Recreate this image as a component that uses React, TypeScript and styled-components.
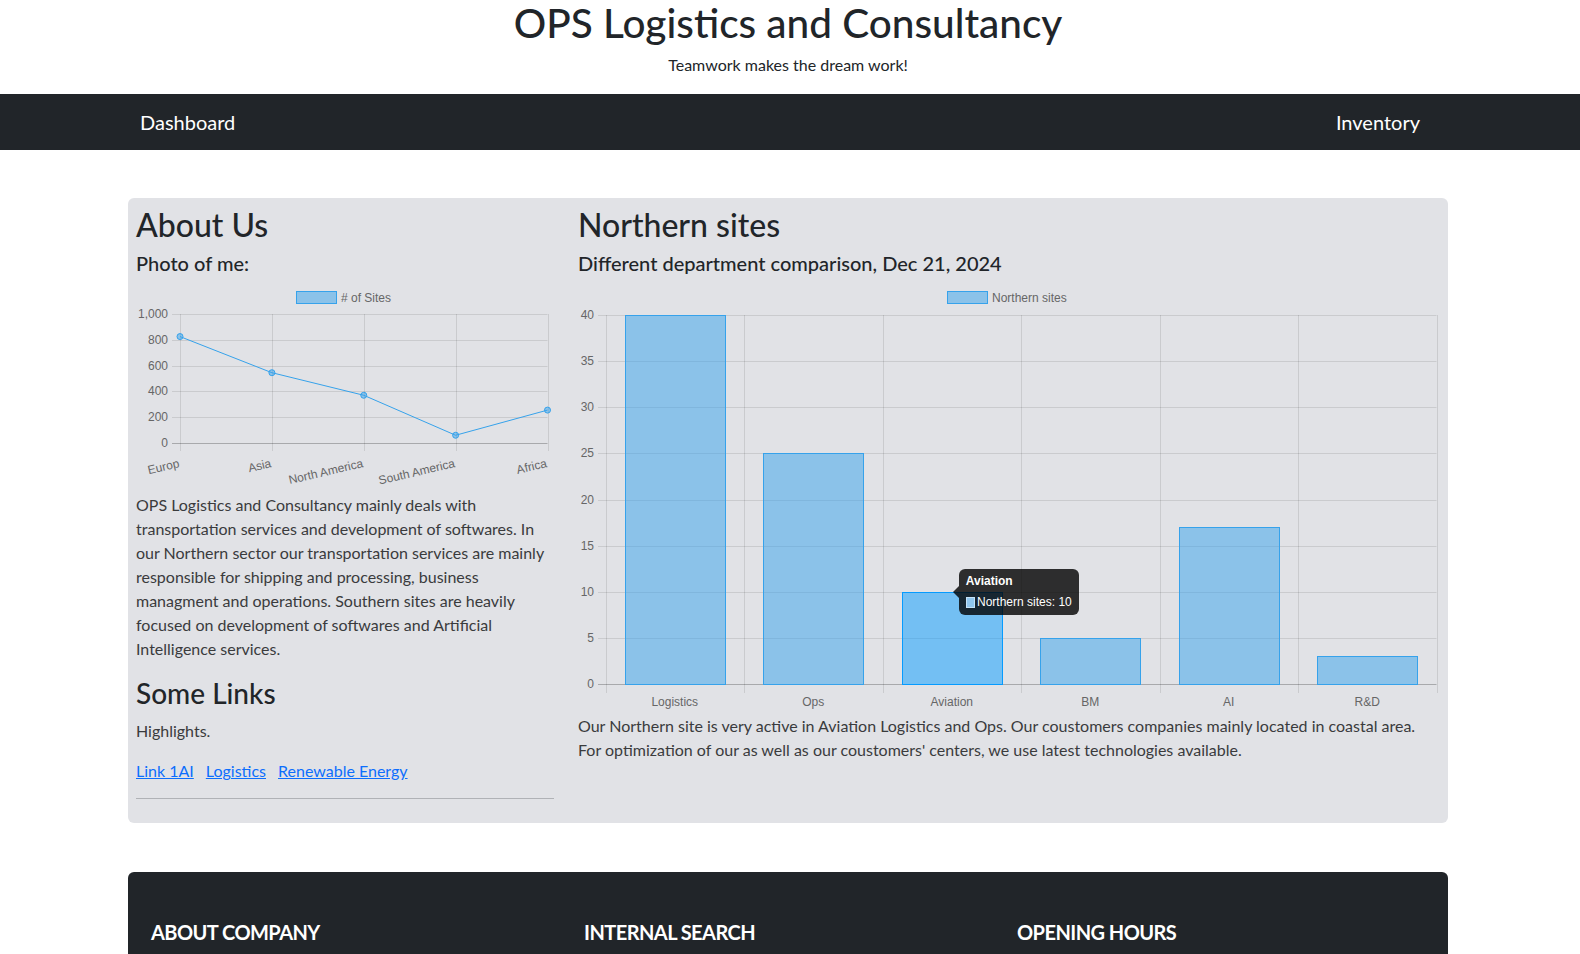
import React from 'react';
import styled, { createGlobalStyle } from 'styled-components';

const FONT = `Lato, "Noto Sans", "Open Sans", sans-serif`;
const CHART_FONT = `"Liberation Sans", Arial, Helvetica, sans-serif`;
const BLUE = 'rgb(54,162,235)';
const BLUE_FILL = 'rgba(54,162,235,0.5)';
const HOVER_FILL = 'rgba(5,155,255,0.5)';
const HOVER_BORDER = 'rgb(5,155,255)';
const GRID = 'rgba(0,0,0,0.1)';
const ZERO = 'rgba(0,0,0,0.25)';

const GlobalStyle = createGlobalStyle`
  html, body { margin: 0; padding: 0; overflow: hidden; background: #fff; }
  body { font-family: ${FONT}; font-size: 16px; line-height: 1.5; color: #212529; }
  *, *::before, *::after { box-sizing: border-box; }
`;

const Header = styled.header`
  text-align: center;
  padding-right: 4px;
`;

const Title = styled.h1`
  margin: 0 0 7px;
  font-size: 40.5px;
  font-weight: 500;
  line-height: 46px;
`;

const Tagline = styled.p`
  margin: 0 0 17px;
  font-size: 16px;
`;

const NavBar = styled.nav`
  background: #212529;
  height: 56px;
`;

const NavInner = styled.div`
  width: 1320px;
  height: 100%;
  margin-left: calc(50% - 662px);
  display: flex;
  align-items: center;
  justify-content: space-between;
  padding: 0 28px 0 12px;
`;

const NavItem = styled.a`
  color: #fff;
  font-size: 20px;
  text-decoration: none;
  line-height: 1.5;
`;

const Container = styled.div`
  width: 1320px;
  margin: 48px 0 0 calc(50% - 662px);
`;

const Card = styled.section`
  background: #e1e2e6;
  border-radius: 6px;
  padding: 8px 11px 8px 8px;
  display: grid;
  grid-template-columns: 418px 859px;
  column-gap: 24px;
  align-items: start;
`;

const Column = styled.div`
  display: flex;
  flex-direction: column;
  min-width: 0;
`;

const H2 = styled.h2`
  margin: 0 0 7px;
  font-size: 32px;
  font-weight: 500;
  line-height: 1.2;
`;

const H3 = styled.h3`
  margin: 0 0 8px;
  font-size: 28px;
  font-weight: 500;
  line-height: 1.2;
`;

const H5 = styled.h5`
  margin: 0 0 9px;
  font-size: 20px;
  font-weight: 500;
  line-height: 1.2;
`;

const Text = styled.p`
  margin: 0 0 16px;
  color: #3a3b3d;
`;

const Links = styled.div`
  display: flex;
  gap: 12px;
  line-height: 24px;
`;

const Link = styled.a`
  color: #0d6efd;
  text-decoration: underline;
`;

const Rule = styled.hr`
  margin: 15px 0 16px;
  border: 0;
  border-top: 1px solid #212529;
  opacity: 0.25;
`;

const ChartWrap = styled.div<{ $h: number }>`
  position: relative;
  width: 100%;
  height: ${(p) => p.$h}px;
  svg { display: block; overflow: visible; }
`;

const Tooltip = styled.div`
  position: absolute;
  width: 120px;
  height: 46px;
  padding: 6px 7px;
  border-radius: 6px;
  background: rgba(0, 0, 0, 0.8);
  color: #fff;
  font-family: ${CHART_FONT};
  font-size: 12px;
  &::before {
    content: '';
    position: absolute;
    left: -6px;
    top: 17px;
    border-top: 6px solid transparent;
    border-bottom: 6px solid transparent;
    border-right: 6px solid rgba(0, 0, 0, 0.8);
  }
`;

const TipTitle = styled.div`
  font-weight: 700;
  line-height: 12px;
  margin-bottom: 9px;
`;

const TipBody = styled.div`
  display: flex;
  align-items: center;
  gap: 2px;
  line-height: 13px;
  white-space: nowrap;
`;

const TipSwatch = styled.span`
  width: 11px;
  height: 11px;
  background: #90c6ee;
  border: 1px solid #c4e2f8;
`;

const Footer = styled.footer`
  width: 1320px;
  height: 120px;
  margin: 49px 0 0 calc(50% - 662px);
  background: #212529;
  border-radius: 6px 6px 0 0;
  padding: 48px 0 0 23px;
  display: grid;
  grid-template-columns: repeat(3, 433px);
  align-items: start;
  color: #fff;
`;

const FooterHeading = styled.h5`
  margin: 0;
  font-size: 20px;
  font-weight: 700;
  line-height: 1.2;
  letter-spacing: -0.55px;
  text-transform: uppercase;
  color: #fff;
`;

/* ---------- line chart ---------- */
const lineData = [
  { label: 'Europ', v: 825 },
  { label: 'Asia', v: 545 },
  { label: 'North America', v: 370 },
  { label: 'South America', v: 60 },
  { label: 'Africa', v: 255 },
];

const LineChart: React.FC = () => {
  const x0 = 44, x1 = 411.5, y0 = 159, yt = 30;
  const ly = (v: number) => y0 - (v / 1000) * (y0 - yt);
  const lx = (i: number) => x0 + (i * (x1 - x0)) / 4;
  const crisp = (n: number) => Math.round(n) + 0.5;
  const ticks = [0, 200, 400, 600, 800, 1000];
  return (
    <ChartWrap $h={209}>
      <svg width="418" height="209" viewBox="0 0 418 209" fontFamily={CHART_FONT} fontSize="12">
        <rect x="160.5" y="7.5" width="40" height="12" fill={BLUE_FILL} stroke={BLUE} strokeWidth="1" />
        <text x="205" y="17.5" fill="#666">
          # of Sites
        </text>
        {ticks.map((t) => (
          <g key={t}>
            <line x1={36} x2={x1} y1={crisp(ly(t))} y2={crisp(ly(t))} stroke={t === 0 ? ZERO : GRID} />
            <text x={32} y={ly(t) + 4} textAnchor="end" fill="#666">
              {t === 1000 ? '1,000' : t}
            </text>
          </g>
        ))}
        {lineData.map((d, i) => (
          <line key={d.label} x1={crisp(lx(i))} x2={crisp(lx(i))} y1={yt} y2={y0 + 8} stroke={GRID} />
        ))}
        <polyline
          points={lineData.map((d, i) => `${lx(i)},${ly(d.v)}`).join(' ')}
          fill="none"
          stroke={BLUE}
          strokeWidth="1"
        />
        {lineData.map((d, i) => (
          <circle key={d.label} cx={lx(i)} cy={ly(d.v)} r="3" fill={BLUE_FILL} stroke={BLUE} strokeWidth="1" />
        ))}
        {lineData.map((d, i) => (
          <text
            key={d.label}
            transform={`translate(${lx(i)},183) rotate(-13)`}
            textAnchor="end"
            fill="#666"
          >
            {d.label}
          </text>
        ))}
      </svg>
    </ChartWrap>
  );
};

/* ---------- bar chart ---------- */
const barData = [
  { label: 'Logistics', v: 40 },
  { label: 'Ops', v: 25 },
  { label: 'Aviation', v: 10 },
  { label: 'BM', v: 5 },
  { label: 'AI', v: 17 },
  { label: 'R&D', v: 3 },
];
const HOVER = 2;

const BarChart: React.FC = () => {
  const x0 = 27.5, x1 = 858.5, y0 = 400, yt = 31;
  const cw = (x1 - x0) / 6;
  const bw = cw * 0.72;
  const by = (v: number) => y0 - (v * (y0 - yt)) / 40;
  const crisp = (n: number) => Math.round(n) + 0.5;
  const ticks = [0, 5, 10, 15, 20, 25, 30, 35, 40];
  const hov = barData[HOVER];
  const tipX = x0 + (HOVER + 0.5) * cw + 7;
  const tipY = by(hov.v) - 23;
  return (
    <ChartWrap $h={430}>
      <svg width="859" height="430" viewBox="0 0 859 430" fontFamily={CHART_FONT} fontSize="12">
        <rect x="369.5" y="7.5" width="40" height="12" fill={BLUE_FILL} stroke={BLUE} strokeWidth="1" />
        <text x="414" y="17.5" fill="#666">
          Northern sites
        </text>
        {ticks.map((t) => (
          <g key={t}>
            <line x1={20} x2={x1} y1={crisp(by(t))} y2={crisp(by(t))} stroke={t === 0 ? ZERO : GRID} />
            <text x={16} y={by(t) + 4} textAnchor="end" fill="#666">
              {t}
            </text>
          </g>
        ))}
        {Array.from({ length: 7 }).map((_, i) => (
          <line key={i} x1={crisp(x0 + i * cw)} x2={crisp(x0 + i * cw)} y1={yt} y2={y0 + 9} stroke={GRID} />
        ))}
        {barData.map((d, i) => {
          const cx = x0 + (i + 0.5) * cw;
          const top = by(d.v);
          const hv = i === HOVER;
          return (
            <rect
              key={d.label}
              x={Math.round(cx - bw / 2) + 0.5}
              y={Math.round(top) + 0.5}
              width={Math.round(bw)}
              height={Math.round(y0) - Math.round(top)}
              fill={hv ? HOVER_FILL : BLUE_FILL}
              stroke={hv ? HOVER_BORDER : BLUE}
              strokeWidth="1"
            />
          );
        })}
        {barData.map((d, i) => (
          <text key={d.label} x={x0 + (i + 0.5) * cw} y={421.5} textAnchor="middle" fill="#666">
            {d.label}
          </text>
        ))}
      </svg>
      <Tooltip style={{ left: tipX, top: tipY }}>
        <TipTitle>{hov.label}</TipTitle>
        <TipBody>
          <TipSwatch />
          Northern sites: {hov.v}
        </TipBody>
      </Tooltip>
    </ChartWrap>
  );
};

export default function App() {
  return (
    <>
      <GlobalStyle />
      <Header>
        <Title>OPS Logistics and Consultancy</Title>
        <Tagline>Teamwork makes the dream work!</Tagline>
      </Header>
      <NavBar>
        <NavInner>
          <NavItem href="#">Dashboard</NavItem>
          <NavItem href="#">Inventory</NavItem>
        </NavInner>
      </NavBar>
      <Container>
        <Card>
          <Column>
            <H2>About Us</H2>
            <H5>Photo of me:</H5>
            <LineChart />
            <Text>
              OPS Logistics and Consultancy mainly deals with transportation services and development of
              softwares. In our Northern sector our transportation services are mainly responsible for shipping
              and processing, business managment and operations. Southern sites are heavily focused on
              development of softwares and Artificial Intelligence services.
            </Text>
            <H3>Some Links</H3>
            <Text>Highlights.</Text>
            <Links>
              <Link href="#">Link 1AI</Link>
              <Link href="#">Logistics</Link>
              <Link href="#">Renewable Energy</Link>
            </Links>
            <Rule />
          </Column>
          <Column>
            <H2>Northern sites</H2>
            <H5>Different department comparison, Dec 21, 2024</H5>
            <BarChart />
            <Text>
              Our Northern site is very active in Aviation Logistics and Ops. Our coustomers companies mainly
              located in coastal area. For optimization of our as well as our coustomers' centers, we use latest
              technologies available.
            </Text>
          </Column>
        </Card>
      </Container>
      <Footer>
        <FooterHeading>About Company</FooterHeading>
        <FooterHeading>Internal Search</FooterHeading>
        <FooterHeading>Opening Hours</FooterHeading>
      </Footer>
    </>
  );
}
